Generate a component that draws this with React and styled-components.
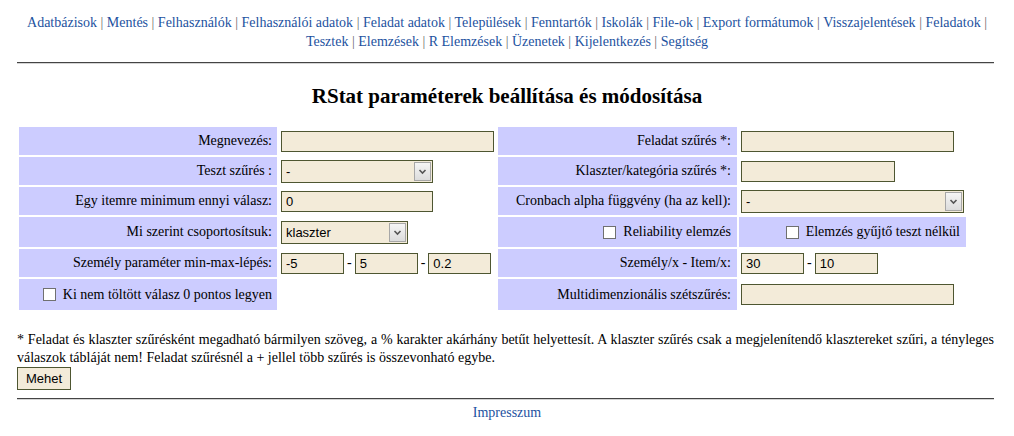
import React from "react";
import styled, { createGlobalStyle } from "styled-components";

const GlobalStyle = createGlobalStyle`
  body {
    margin: 8px;
    background: #ffffff;
    color: #000000;
    font-family: "Liberation Serif", "Times New Roman", serif;
    font-size: 14px;
  }
`;

const menu = [
  "Adatbázisok",
  "Mentés",
  "Felhasználók",
  "Felhasználói adatok",
  "Feladat adatok",
  "Települések",
  "Fenntartók",
  "Iskolák",
  "File-ok",
  "Export formátumok",
  "Visszajelentések",
  "Feladatok",
  "Tesztek",
  "Elemzések",
  "R Elemzések",
  "Üzenetek",
  "Kijelentkezés",
  "Segítség",
];

const Nav = styled.div`
  text-align: center;
  line-height: 19px;
  padding-top: 5px;
`;

const NavLink = styled.a`
  color: #1d52a0;
  text-decoration: none;
`;

const Sep = styled.span`
  color: #6a6a6a;
`;

const Rule = styled.div`
  margin: ${(p) => p.$top}px 0 0 9px;
  width: 977px;
  border-top: 1px solid #444444;
  border-bottom: 1px solid #d4d4d4;
`;

const Title = styled.h2`
  margin: 20px 0 18px;
  text-align: center;
  font-size: 21px;
  font-weight: bold;
`;

const FormGrid = styled.div`
  display: grid;
  grid-template-columns: 258px 217px 239px 227px;
  grid-template-rows: 28px 28px 28px 30px 28px 31px;
  gap: 2px;
  margin-left: 11px;
`;

const LabelCell = styled.div`
  background: #ccccff;
  display: flex;
  align-items: center;
  justify-content: flex-end;
  padding-right: ${(p) => p.$pad || 5}px;
  white-space: nowrap;
`;

const FieldCell = styled.div`
  display: flex;
  align-items: center;
  padding-left: 2px;
  gap: 2px;
`;

const TextInput = styled.input`
  box-sizing: border-box;
  width: ${(p) => p.$w}px;
  height: 21px;
  border: 1px solid #4e5631;
  background: #f3ebd9;
  padding: 0 4px;
  font-family: "Liberation Sans", Arial, sans-serif;
  font-size: 13px;
  color: #000;
  outline: none;
`;

const SelectBox = styled.span`
  box-sizing: border-box;
  display: inline-flex;
  width: ${(p) => p.$w}px;
  height: 23px;
  border: 1px solid #4e5631;
  background: #f3ebd9;
`;

const NativeSelect = styled.select`
  appearance: none;
  flex: 1;
  min-width: 0;
  border: none;
  background: transparent;
  padding: 0 4px;
  font-family: "Liberation Sans", Arial, sans-serif;
  font-size: 13px;
  color: #000;
  outline: none;
`;

const ArrowBox = styled.span`
  box-sizing: border-box;
  width: 17px;
  margin: 1px;
  border: 1px solid #a7a7a7;
  background: linear-gradient(#f5f5f5, #dcdcdc);
  display: flex;
  align-items: center;
  justify-content: center;
`;

const Dash = styled.span`
  padding: 0 1px;
`;

const Check = styled.input`
  appearance: none;
  box-sizing: border-box;
  width: 13px;
  height: 13px;
  margin: 0 7px 0 0;
  border: 1px solid #707070;
  background: #ffffff;
`;

const Note = styled.p`
  margin: 21px 0 0 9px;
  width: 977px;
  line-height: 18px;
  text-align: justify;
`;

const Button = styled.button`
  display: block;
  margin: 0 0 0 9px;
  height: 23px;
  padding: 0 8px;
  border: 1px solid #4e5631;
  background: #f3ebd9;
  font-family: "Liberation Sans", Arial, sans-serif;
  font-size: 13px;
  color: #000;
`;

const Footer = styled.div`
  text-align: center;
  margin-top: 5px;
`;

function Select({ w, value }) {
  return (
    <SelectBox $w={w}>
      <NativeSelect defaultValue={value}>
        <option value={value}>{value}</option>
      </NativeSelect>
      <ArrowBox>
        <svg width="9" height="7" viewBox="0 0 9 7">
          <path d="M1.5 2 L4.5 5 L7.5 2" fill="none" stroke="#555" strokeWidth="1.6" />
        </svg>
      </ArrowBox>
    </SelectBox>
  );
}

export default function App() {
  return (
    <>
      <GlobalStyle />
      <Nav>
        {menu.map((item, i) => (
          <React.Fragment key={item}>
            <NavLink href="#">{item}</NavLink>
            {i < menu.length - 1 && <Sep>{"\u00a0|"}</Sep>}{" "}
          </React.Fragment>
        ))}
      </Nav>
      <Rule $top={11} />
      <Title>RStat paraméterek beállítása és módosítása</Title>

      <FormGrid>
        <LabelCell>Megnevezés:</LabelCell>
        <FieldCell>
          <TextInput $w={213} autoFocus />
        </FieldCell>
        <LabelCell $pad={6}>Feladat szűrés *:</LabelCell>
        <FieldCell>
          <TextInput $w={213} />
        </FieldCell>

        <LabelCell>Teszt szűrés :</LabelCell>
        <FieldCell>
          <Select w={152} value="-" />
        </FieldCell>
        <LabelCell $pad={6}>Klaszter/kategória szűrés *:</LabelCell>
        <FieldCell>
          <TextInput $w={154} />
        </FieldCell>

        <LabelCell>Egy itemre minimum ennyi válasz:</LabelCell>
        <FieldCell>
          <TextInput $w={152} defaultValue="0" />
        </FieldCell>
        <LabelCell $pad={6}>Cronbach alpha függvény (ha az kell):</LabelCell>
        <FieldCell>
          <Select w={223} value="-" />
        </FieldCell>

        <LabelCell>Mi szerint csoportosítsuk:</LabelCell>
        <FieldCell>
          <Select w={127} value="klaszter" />
        </FieldCell>
        <LabelCell $pad={6}>
          <Check type="checkbox" />
          Reliability elemzés
        </LabelCell>
        <LabelCell $pad={6}>
          <Check type="checkbox" />
          Elemzés gyűjtő teszt nélkül
        </LabelCell>

        <LabelCell>Személy paraméter min-max-lépés:</LabelCell>
        <FieldCell>
          <TextInput $w={63} defaultValue="-5" />
          <Dash>-</Dash>
          <TextInput $w={63} defaultValue="5" />
          <Dash>-</Dash>
          <TextInput $w={63} defaultValue="0.2" />
        </FieldCell>
        <LabelCell $pad={6}>Személy/x - Item/x:</LabelCell>
        <FieldCell>
          <TextInput $w={63} defaultValue="30" />
          <Dash>-</Dash>
          <TextInput $w={63} defaultValue="10" />
        </FieldCell>

        <LabelCell>
          <Check type="checkbox" />
          Ki nem töltött válasz 0 pontos legyen
        </LabelCell>
        <FieldCell />
        <LabelCell $pad={6}>Multidimenzionális szétszűrés:</LabelCell>
        <FieldCell>
          <TextInput $w={213} />
        </FieldCell>
      </FormGrid>

      <Note>
        * Feladat és klaszter szűrésként megadható bármilyen szöveg, a % karakter akárhány betűt
        helyettesít. A klaszter szűrés csak a megjelenítendő klasztereket szűri, a tényleges
        válaszok tábláját nem! Feladat szűrésnél a + jellel több szűrés is összevonható egybe.
      </Note>
      <Button>Mehet</Button>
      <Rule $top={8} />
      <Footer>
        <NavLink href="#">Impresszum</NavLink>
      </Footer>
    </>
  );
}
